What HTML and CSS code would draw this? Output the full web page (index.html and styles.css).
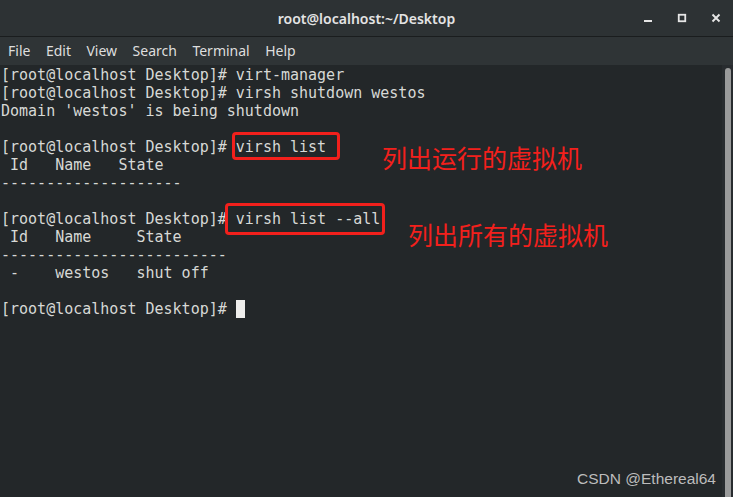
FILE: index.html
```html
<!DOCTYPE html>
<html lang="en">
<head>
  <meta charset="UTF-8" />
  <meta name="viewport" content="width=device-width, initial-scale=1.0" />
  <title>root@localhost:~/Desktop</title>
  <link rel="stylesheet" href="styles.css">
</head>
<body>
  <div class="window">
    <div class="titlebar">
      <div class="title">root@localhost:~/Desktop</div>
      <div class="controls">
        <svg class="ctl" width="10" height="10" viewBox="0 0 10 10"><rect x="1" y="7" width="8" height="2" fill="#e6e6e6"/></svg>
        <svg class="ctl" width="10" height="10" viewBox="0 0 10 10"><rect x="1.75" y="1.75" width="6.5" height="6.5" fill="none" stroke="#e6e6e6" stroke-width="1.8"/></svg>
        <svg class="ctl" width="10" height="10" viewBox="0 0 10 10"><path d="M1.5 1.5 L8.5 8.5 M8.5 1.5 L1.5 8.5" stroke="#e6e6e6" stroke-width="1.9"/></svg>
      </div>
    </div>

    <div class="menubar">
      <span>File</span>
      <span>Edit</span>
      <span>View</span>
      <span>Search</span>
      <span>Terminal</span>
      <span>Help</span>
    </div>

    <div class="terminal">
      <pre class="screen">[root@localhost Desktop]# virt-manager
[root@localhost Desktop]# virsh shutdown westos
Domain 'westos' is being shutdown

[root@localhost Desktop]# virsh list
 Id   Name   State
--------------------

[root@localhost Desktop]# virsh list --all
 Id   Name     State
-------------------------
 -    westos   shut off

[root@localhost Desktop]# <span class="cursor"> </span></pre>
      <div class="trough"><div class="thumb"></div></div>

      <!-- annotations drawn on top of the screenshot -->
      <div class="mark mark-list"></div>
      <div class="mark mark-all"></div>
      <div class="note note-list">列出运行的虚拟机</div>
      <div class="note note-all">列出所有的虚拟机</div>
      <div class="watermark">CSDN @Ethereal64</div>
    </div>
  </div>
</body>
</html>
```

FILE: styles.css
```css
body, html {
  margin: 0;
  padding: 0;
  background-color: #232729;
}
.window {
  width: 733px;
  height: 497px;
  display: flex;
  flex-direction: column;
  overflow: hidden;
}
.titlebar {
  flex-shrink: 0;
  height: 36px;
  background-color: #2d3234;
  border-bottom: 1px solid #1a1d1e;
  display: flex;
  align-items: center;
  justify-content: center;
  position: relative;
  font-family: "Noto Sans", "DejaVu Sans", sans-serif;
}
.title {
  color: #e4e4e4;
  font-size: 14px;
  font-weight: 600;
}
.controls {
  position: absolute;
  right: 12px;
  top: 13px;
  display: flex;
  gap: 24px;
}
.menubar {
  flex-shrink: 0;
  height: 27px;
  background-color: #2f3436;
  display: flex;
  align-items: center;
  gap: 15.5px;
  padding-left: 8px;
  padding-bottom: 1px;
  color: #dedede;
  font-family: "Noto Sans", "DejaVu Sans", sans-serif;
  font-size: 14px;
}
.terminal {
  flex: 1;
  min-height: 0;
  display: flex;
  position: relative;
}
.screen {
  flex: 1;
  margin: 0;
  padding: 1px 0 0 1px;
  font-family: "DejaVu Sans Mono", monospace;
  font-size: 15px;
  line-height: 18px;
  color: #d7d9d6;
}
.cursor {
  background-color: #eeeeec;
}
.trough {
  width: 11px;
  background-color: #282c2f;
  padding-top: 3px;
}
.thumb {
  width: 6px;
  margin-left: 3px;
  height: 440px;
  border-radius: 3px;
  background-color: #9a9b9b;
}
.mark {
  position: absolute;
  border: 3px solid #f2201c;
  border-radius: 4px;
}
.mark-list {
  left: 232px;
  top: 67px;
  width: 102px;
  height: 22px;
}
.mark-all {
  left: 225px;
  top: 138px;
  width: 154px;
  height: 26px;
}
.note {
  position: absolute;
  color: #f3201c;
  font-family: "Noto Sans CJK SC", sans-serif;
  font-size: 25px;
  line-height: 25px;
}
.note-list {
  left: 382px;
  top: 80px;
}
.note-all {
  left: 408px;
  top: 157px;
}
.watermark {
  position: absolute;
  right: 17px;
  bottom: 9px;
  color: #bcbcbc;
  font-family: "Liberation Sans", Arial, sans-serif;
  font-size: 15.5px;
}
```
